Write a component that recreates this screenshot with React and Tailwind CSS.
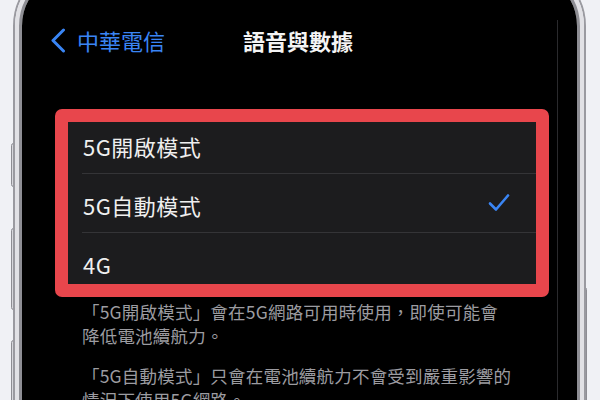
const rows = [
  { id: "on", label: "5G開啟模式", checked: false },
  { id: "auto", label: "5G自動模式", checked: true },
  { id: "4g", label: "4G", checked: false },
];

const Chevron = () => (
  <svg width="16" height="25" viewBox="0 0 16 25" fill="none">
    <path
      d="M13.5 2 L3 12.5 L13.5 23"
      stroke="#3a85f4"
      strokeWidth="3"
      strokeLinecap="round"
      strokeLinejoin="round"
    />
  </svg>
);

const Check = () => (
  <svg width="22" height="20" viewBox="0 0 22 20" fill="none">
    <path
      d="M2 10.5 L8 16.5 L20 2.5"
      stroke="#3a85f4"
      strokeWidth="2.6"
      strokeLinecap="round"
      strokeLinejoin="round"
    />
  </svg>
);

const SideButton = ({ className }) => (
  <div
    className={`absolute w-[5px] rounded-[3px] border border-[#8d8d93] bg-[#d7d7dc] ${className}`}
  />
);

export default function App() {
  return (
    <div
      lang="zh-Hant-TW"
      className="relative h-[400px] w-[600px] overflow-hidden bg-[#f0f1f5]"
      style={{ fontFamily: '"Noto Sans CJK TC", "Noto Sans", sans-serif' }}
    >
      <SideButton className="left-[11px] top-[143px] h-[44px]" />
      <SideButton className="left-[11px] top-[228px] h-[82px]" />
      <SideButton className="left-[11px] top-[340px] h-[90px]" />
      <SideButton className="left-[582px] top-[287px] h-[140px]" />

      <div className="relative ml-[13px] mt-[-36px] h-[520px] w-[573px] rounded-[62px] border-2 border-[#9a9aa0]">
        <div className="h-full w-full rounded-[60px] border-[4px] border-[#e1e1e5]">
          <div className="h-full w-full rounded-[56px] border-[3px] border-[#8e8e94]">
            <div className="relative h-full w-full overflow-hidden rounded-[53px] border-2 border-black bg-black">
              {/* glass reflection line */}
              <div className="absolute right-[17px] top-[45px] h-[480px] w-px bg-[#2a2a2d]" />

              <div className="mt-[43px] grid h-[44px] grid-cols-[1fr_auto_1fr] items-center">
                <div className="flex items-center gap-[11px] pl-[26px] text-[22px] leading-none text-[#3a85f4]">
                  <Chevron />
                  <span>中華電信</span>
                </div>
                <div className="pr-[3px] text-[22px] font-semibold leading-none text-[#f4f4f4]">
                  語音與數據
                </div>
                <div />
              </div>

              <div className="ml-[31px] mt-[47px] h-[188px] w-[494px] rounded-[7px] border-[13px] border-[#e8464c]">
                <div className="h-full overflow-hidden bg-[#1c1c1e]">
                  <div className="mt-[-7px]">
                    {rows.map((row, index) => (
                      <div key={row.id}>
                        {index > 0 && <div className="ml-[14px] h-px bg-[#343437]" />}
                        <div className="flex h-[58px] items-center justify-between pl-[15px] pr-[26px]">
                          <span className="pt-[4px] text-[22px] leading-none tracking-[0.5px] text-[#efefef]">
                            {row.label}
                          </span>
                          {row.checked && <Check />}
                        </div>
                      </div>
                    ))}
                  </div>
                </div>
              </div>

              <div className="ml-[58px] mt-[3px] text-[17.5px] leading-[24px] tracking-[0.2px] text-[#9c9ca1]">
                <p>
                  「5G開啟模式」會在5G網路可用時使用，即使可能會
                  <br />
                  降低電池續航力。
                </p>
                <p className="mt-[16px]">
                  「5G自動模式」只會在電池續航力不會受到嚴重影響的
                  <br />
                  情況下使用5G網路。
                </p>
              </div>
            </div>
          </div>
        </div>
      </div>
    </div>
  );
}
